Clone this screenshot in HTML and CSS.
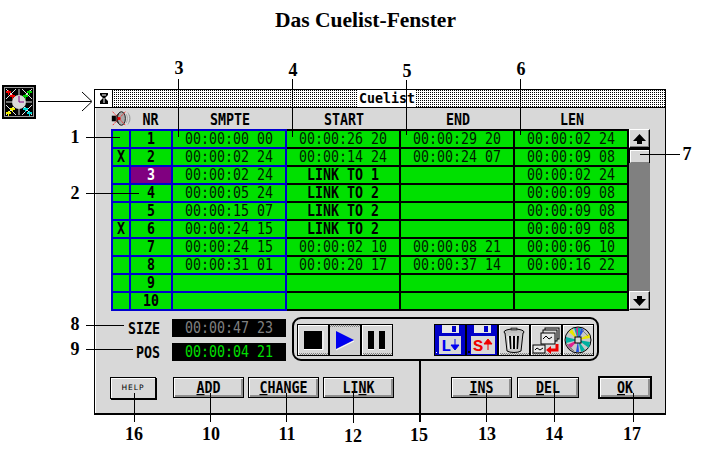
FILE: index.html
```html
<!DOCTYPE html>
<html lang="de">
<head>
<meta charset="utf-8">
<title>Das Cuelist-Fenster</title>
<link rel="stylesheet" href="styles.css">
</head>
<body>
<div class="page">
  <h1 class="heading">Das Cuelist-Fenster</h1>

  <section class="window">
    <div class="titlebar">
      <div class="sysbox">
        <svg width="18" height="17" viewBox="0 0 18 17"><path d="M5 3h8v2l-3 3 3 3v3H5v-3l3-3-3-3z" fill="#000"/><path d="M7 5h4M8 12h2M9 8v3" stroke="#fff" stroke-width="1"/></svg>
      </div>
      <div class="titletrack"><span class="titletext">Cuelist</span></div>
    </div>
    <div class="client">
      <div class="colhead">
        <div class="speaker">
          <svg width="25" height="19" viewBox="0 0 25 19">
            <rect x="1" y="6" width="5" height="7" fill="#000"/>
            <path d="M6 7l5-5h4v15h-4l-5-5z" fill="#606060" stroke="#000"/>
            <ellipse cx="13" cy="9.500" rx="5" ry="8.500" fill="#a8a8a8" stroke="#000"/>
            <path d="M19 4c2 3 2 8 0 11M21 2c3 4 3 11 0 15M23 5c1 3 1 6 0 9" fill="none" stroke="#9a9a9a"/>
            <path d="M2 1l16 17M18 1L2 18" stroke="#f00" fill="none" stroke-dasharray="2 1"/>
            <circle cx="10" cy="9.500" r="2" fill="#e00000"/>
          </svg>
        </div>
        <div class="nrhead"><span class="t">NR</span></div><div><span class="t">SMPTE</span></div><div><span class="t">START</span></div><div><span class="t">END</span></div><div><span class="t">LEN</span></div>
      </div>
      <div class="listarea">
        <div class="grid">
          <div class="c b edge top"></div><div class="c b top"><span class="t">1</span></div><div class="c b top"><span class="l">00:00:00 00</span></div><div class="c k top"><span class="l">00:00:26 20</span></div><div class="c k top"><span class="l">00:00:29 20</span></div><div class="c k top"><span class="l">00:00:02 24</span></div>
          <div class="c b edge"><span class="t">X</span></div><div class="c b"><span class="t">2</span></div><div class="c b"><span class="l">00:00:02 24</span></div><div class="c k"><span class="l">00:00:14 24</span></div><div class="c k"><span class="l">00:00:24 07</span></div><div class="c k"><span class="l">00:00:09 08</span></div>
          <div class="c b edge"></div><div class="c b sel"><span class="t">3</span></div><div class="c b"><span class="l">00:00:02 24</span></div><div class="c k"><span class="t">LINK TO 1</span></div><div class="c k"></div><div class="c k"><span class="l">00:00:02 24</span></div>
          <div class="c b edge"></div><div class="c b"><span class="t">4</span></div><div class="c b"><span class="l">00:00:05 24</span></div><div class="c k"><span class="t">LINK TO 2</span></div><div class="c k"></div><div class="c k"><span class="l">00:00:09 08</span></div>
          <div class="c b edge"></div><div class="c b"><span class="t">5</span></div><div class="c b"><span class="l">00:00:15 07</span></div><div class="c k"><span class="t">LINK TO 2</span></div><div class="c k"></div><div class="c k"><span class="l">00:00:09 08</span></div>
          <div class="c b edge"><span class="t">X</span></div><div class="c b"><span class="t">6</span></div><div class="c b"><span class="l">00:00:24 15</span></div><div class="c k"><span class="t">LINK TO 2</span></div><div class="c k"></div><div class="c k"><span class="l">00:00:09 08</span></div>
          <div class="c b edge"></div><div class="c b"><span class="t">7</span></div><div class="c b"><span class="l">00:00:24 15</span></div><div class="c k"><span class="l">00:00:02 10</span></div><div class="c k"><span class="l">00:00:08 21</span></div><div class="c k"><span class="l">00:00:06 10</span></div>
          <div class="c b edge"></div><div class="c b"><span class="t">8</span></div><div class="c b"><span class="l">00:00:31 01</span></div><div class="c k"><span class="l">00:00:20 17</span></div><div class="c k"><span class="l">00:00:37 14</span></div><div class="c k"><span class="l">00:00:16 22</span></div>
          <div class="c b edge"></div><div class="c b"><span class="t">9</span></div><div class="c b"></div><div class="c k"></div><div class="c k"></div><div class="c k"></div>
          <div class="c b edge"></div><div class="c b"><span class="t">10</span></div><div class="c b"></div><div class="c k"></div><div class="c k"></div><div class="c k"></div>
        </div>
        <div class="scrollbar">
          <div class="arrow"><svg width="15" height="12" viewBox="0 0 15 12"><path d="M7.500 1L14 8H10V11H5V8H1z" fill="#000"/></svg></div>
          <div class="thumbzone"><div class="thumb"></div></div>
          <div class="trough"></div>
          <div class="arrow"><svg width="15" height="12" viewBox="0 0 15 12"><path d="M7.500 11L14 4H10V1H5V4H1z" fill="#000"/></svg></div>
        </div>
      </div>

      <div class="lower">
        <div class="readouts">
          <div class="readout"><span class="rlabel">SIZE</span><span class="lcd dim"><span class="l">00:00:47 23</span></span></div>
          <div class="readout"><span class="rlabel">POS</span><span class="lcd live"><span class="l">00:00:04 21</span></span></div>
        </div>
        <div class="toolbar">
          <div class="transport">
            <div class="tbtn"><svg viewBox="0 0 30 30"><rect x="6" y="6" width="18" height="18" fill="#000"/><path d="M6 24.500h19V6" fill="none" stroke="#fff"/></svg></div>
            <div class="tbtn pressed"><svg viewBox="0 0 30 30"><path d="M6 6l18 9-18 9z" fill="#0000f0"/><path d="M6 25l18-9" stroke="#fff" fill="none"/></svg></div>
            <div class="tbtn"><svg viewBox="0 0 30 30"><rect x="6" y="6" width="6" height="18" fill="#000"/><rect x="17" y="6" width="6" height="18" fill="#000"/><path d="M6 24.500h6M17 24.500h6" stroke="#fff"/></svg></div>
          </div>
          <div class="tools">
            <div class="tbtn disk"><svg viewBox="0 0 30 30"><rect width="30" height="30" fill="#0000c8"/><rect x="7" y="0" width="17" height="8" fill="#e8e8e8"/><rect x="17" y="1" width="4" height="6" fill="#0000c8"/><rect x="4" y="11" width="22" height="18" fill="#d8d8d8"/><rect x="1" y="27" width="1" height="1" fill="#fff"/><text class="disktext blue" x="6" y="26">L</text><path d="M20 14v7M16 20h8l-4 5z" fill="#0000f0" stroke="#0000f0"/></svg></div>
            <div class="tbtn disk"><svg viewBox="0 0 30 30"><rect width="30" height="30" fill="#0000c8"/><rect x="7" y="0" width="17" height="8" fill="#e8e8e8"/><rect x="17" y="1" width="4" height="6" fill="#0000c8"/><rect x="4" y="11" width="24" height="18" fill="#d8d8d8"/><rect x="1" y="26" width="2" height="2" fill="#000"/><text class="disktext red" x="6" y="26">S</text><path d="M21 25v-8M17 19l4-5 4 5z" fill="#f00000" stroke="#f00000"/></svg></div>
            <div class="tbtn"><svg viewBox="0 0 30 30"><ellipse cx="15" cy="7" rx="10" ry="3" fill="#c0c0c0" stroke="#000"/><rect x="12" y="3" width="6" height="2" fill="#808080" stroke="#000" stroke-width=".6"/><path d="M6 8l2 18c3 2 11 2 14 0l2-18" fill="#c8c8c8" stroke="#000"/><path d="M11 11l1 13M15 11v13M19 11l-1 13" stroke="#000" stroke-width="2"/><path d="M9 11l1 13M13 11v13M17 11v13" stroke="#fff"/></svg></div>
            <div class="tbtn"><svg viewBox="0 0 30 30"><rect x="14" y="3" width="14" height="11" fill="#d8d8d8" stroke="#000"/><rect x="12" y="5" width="14" height="11" fill="#d8d8d8" stroke="#000"/><rect x="10" y="8" width="14" height="11" fill="#e8e8e8" stroke="#000"/><path d="M12 14l3-3 3 3 3-2" fill="none" stroke="#000"/><rect x="2" y="20" width="12" height="8" fill="#e8e8e8" stroke="#000"/><path d="M4 25l2-2 3 2 3-2" fill="none" stroke="#000"/><path d="M26 19v6H18" fill="none" stroke="#f00000" stroke-width="3"/><path d="M20 21l-5 4 5 4z" fill="#f00000"/></svg></div>
            <div class="tbtn"><svg viewBox="0 0 30 30"><circle cx="15" cy="15" r="13" fill="#c8c8c8" stroke="#000"/><path d="M15 15L11 3h7zM15 15l12 2-1 6zM15 15l-12-3 0 6zM15 15l3 12 4-2z" fill="#00b0a0"/><path d="M15 15l-9-8 3-3zM15 15l11-6 1 4z" fill="#e8e800"/><path d="M15 15l-11 5 3 4zM15 15L13 3h2z" fill="#e02090"/><path d="M15 15l3-12 3 2zM15 15l-2 12h3z" fill="#2050e0"/><path d="M3 18l8 8M5 22l6 4M19 5l6 6" stroke="#808080" fill="none"/><rect x="12" y="12" width="6" height="6" fill="#d8d8d8" stroke="#000"/></svg></div>
          </div>
        </div>
      </div>

      <div class="buttons">
        <button class="btn help">HELP</button>
        <button class="btn add"><span class="t"><u>A</u>DD</span></button>
        <button class="btn change"><span class="t"><u>C</u>HANGE</span></button>
        <button class="btn link"><span class="t">LI<u>N</u>K</span></button>
        <button class="btn ins"><span class="t"><u>I</u>NS</span></button>
        <button class="btn del"><span class="t"><u>D</u>EL</span></button>
        <button class="btn ok"><span class="t"><u>O</u>K</span></button>
      </div>
    </div>
  </section>

  <div class="appicon">
    <svg width="34" height="34" viewBox="0 0 34 34">
      <rect width="34" height="34" fill="#000"/>
      <rect x="2.500" y="2.500" width="29" height="29" fill="#000" stroke="#9a9a9a"/>
      <path d="M4 4l26 26M30 4L4 30M14 4L4 14M20 4l10 10M4 20l10 10M30 20L20 30M17 4v6M17 24v6M4 17h6M24 17h6" stroke="#e0e0e0" fill="none"/>
      <circle cx="17" cy="17" r="7" fill="#d8d8d8"/>
      <path d="M17 11v6h5" stroke="#800080" fill="none"/>
      <g stroke-width="1.500" shape-rendering="crispEdges">
        <path d="M4 7h5M6.500 4.500v5M8 11h5M10.500 8.500v5" stroke="#f00000"/>
        <path d="M25 7h5M27.500 4.500v5M21 11h5M23.500 8.500v5" stroke="#00d000"/>
        <path d="M4 28h5M6.500 25.500v5M8 24h5M10.500 21.500v5" stroke="#f0f000"/>
        <path d="M25 28h5M27.500 25.500v5M21 24h5M23.500 21.500v5" stroke="#00d8d8"/>
      </g>
    </svg>
  </div>

  <svg class="leaders" width="704" height="450" viewBox="0 0 704 450">
    <g stroke="#000" fill="none" shape-rendering="crispEdges">
      <path d="M38 101.500H91M86 137.500H120M86 193.500H139M640 154.500H680M86 325.500H124M86 349.500H133"/>
      <path d="M178.500 79V137M292.500 79V137M406.500 80V135M520.500 79V135"/>
      <path d="M134.500 393V422M210.500 393V422M286.500 393V422M353.500 393V423M486.500 393V422M554.500 393V422M633.500 393V422"/>
      <path d="M420 359V422" stroke-width="2"/>
    </g>
    <path d="M82 92l10 9.500-10 9.500" stroke="#000" fill="none"/>
  </svg>

  <span class="num n1">1</span><span class="num n2">2</span><span class="num n3">3</span><span class="num n4">4</span><span class="num n5">5</span><span class="num n6">6</span><span class="num n7">7</span><span class="num n8">8</span><span class="num n9">9</span><span class="num n10">10</span><span class="num n11">11</span><span class="num n12">12</span><span class="num n13">13</span><span class="num n14">14</span><span class="num n15">15</span><span class="num n16">16</span><span class="num n17">17</span>
</div>
</body>
</html>
```

FILE: styles.css
```css
* { box-sizing: border-box; }
html, body { margin: 0; padding: 0; background: #fff; }
.page { position: relative; width: 704px; height: 450px; overflow: hidden; font-family: "DejaVu Sans Mono", "Liberation Mono", monospace; color: #000; }
.heading { margin: 0 0 0 275px; height: 89px; padding-top: 8px; font: bold 21.5px/24px "Liberation Serif", serif; white-space: nowrap; }

.window { margin-left: 94px; width: 572px; border: 1px solid #000; border-bottom-width: 2px; background: #d8d8d8; }
.titlebar { display: flex; height: 18px; border-bottom: 1px solid #000; }
.sysbox { width: 18px; background: #fff; border-right: 1px solid #000; flex: none; }
.titletrack { flex: 1; display: flex; justify-content: center; align-items: center; background: conic-gradient(#000 0 25%, #fff 0) 0 0 / 2px 2px; padding-right: 4px; }
.titletext { background: #fff; font-weight: bold; font-size: 13.3px; line-height: 17px; padding: 0 1px; }

.client { padding: 0 0 14px 15px; border-left: 1px solid #fff; }
.colhead { display: grid; grid-template-columns: 20px 42px repeat(4, 114px); height: 21px; text-align: center; align-items: center; }
.speaker { display: flex; height: 19px; }
.nrhead { padding-right: 3px; }

.listarea { display: flex; }
.grid { display: grid; grid-template-columns: 20px 42px repeat(4, 114px); grid-template-rows: 20px repeat(9, 18px); }
.c { display: flex; align-items: center; justify-content: center; background: #00e000; border-right: 2px solid; border-bottom: 2px solid; }
.c.b { border-color: #0000d0; }
.c.k { border-color: #000; }
.c.edge { border-left: 2px solid #0000d0; }
.c.top { border-top: 2px solid; }
.c.b.top { border-top-color: #0000d0; }
.c.k.top { border-top-color: #000; }
.c.sel { background: #800080; color: #fff; }
.t { display: inline-block; font-weight: bold; font-size: 13.3px; line-height: 14px; transform: scaleY(1.2); white-space: pre; }
.l { display: inline-block; font-size: 13.3px; line-height: 14px; color: #001a00; transform: scaleY(1.25); white-space: pre; }

.scrollbar { width: 21px; height: 181px; display: flex; flex-direction: column; }
.arrow { height: 19px; flex: none; display: flex; align-items: center; justify-content: center; background: #d8d8d8; border: 1px solid #000; border-top-color: #fff; border-left-color: #fff; box-shadow: inset -1px -1px 0 #808080; }
.thumbzone { height: 15px; flex: none; background: #000; padding: 2px 1px 0 1px; }
.thumb { height: 13px; background: #d8d8d8; border-top: 1px solid #fff; border-left: 1px solid #fff; border-bottom: 1px solid #808080; }
.trough { flex: 1; background: #808080; }

.lower { display: flex; margin-top: 6px; height: 44px; }
.readouts { width: 175px; display: flex; flex-direction: column; gap: 6px; padding-top: 2px; }
.readout { display: flex; justify-content: flex-end; align-items: center; gap: 12px; height: 18px; }
.rlabel { font-weight: bold; font-size: 13.3px; display: inline-block; transform: scaleY(1.2); }
.lcd { width: 114px; height: 18px; background: #000; display: flex; align-items: center; justify-content: center; }
.lcd.dim .l { color: #808080; }
.lcd.live .l { color: #00e000; }
.toolbar { margin-left: 6px; width: 307px; height: 44px; border: 2px solid #000; border-radius: 9px; display: flex; justify-content: space-between; padding: 5px 3px 0 3px; }
.transport, .tools { display: flex; height: 32px; }
.tbtn { width: 32px; height: 32px; padding: 0; border: 1px solid #000; background: conic-gradient(#808080 0 25%, #d8d8d8 0 50%, #808080 0 75%, #d8d8d8 0) 0 100% / 2px 2px repeat-x, #d8d8d8; box-shadow: inset 1px 1px 0 #fff; }
.tbtn svg { display: block; width: 30px; height: 30px; }
.tbtn.pressed { background: conic-gradient(#808080 0 25%, #d8d8d8 0 50%, #808080 0 75%, #d8d8d8 0) 0 0 / 2px 2px repeat-x, #d0d0d0; box-shadow: none; }
.tbtn.disk { background: #0000c8; box-shadow: none; }
.disktext { font: bold 17px "Liberation Mono", monospace; }
.blue { fill: #0000f0; }
.red { fill: #f00000; }

.buttons { display: flex; align-items: center; margin: 15px 0 0 -1px; height: 23px; gap: 4px; }
.btn { margin: 0; padding: 0; height: 21px; background: #d8d8d8; border: 1px solid #000; font: bold 13.3px/1 "DejaVu Sans Mono", monospace; color: #000; box-shadow: inset 1px 1px 0 #fff, inset -2px -2px 0 #909090; }
.help { width: 46px; height: 22px; font: normal 7.5px "DejaVu Sans", sans-serif; letter-spacing: 1px; margin-right: 13px; box-shadow: inset 1px 1px 0 #fff, 1px 1px 0 #000; }
.add, .change, .link { width: 71px; }
.ins { width: 61px; margin-left: 53px; }
.del { width: 62px; margin-left: 1px; }
.ok { width: 54px; height: 23px; margin-left: 15px; border-width: 2px; }

.appicon { position: absolute; left: 2px; top: 85px; width: 34px; height: 34px; }
.appicon svg, .leaders { display: block; }
.leaders { position: absolute; left: 0; top: 0; pointer-events: none; }
.num { position: absolute; transform: translate(-50%, -50%); font: bold 18px/1 "Liberation Serif", serif; }
.n1 { left: 75px; top: 137px; } .n2 { left: 75px; top: 193px; } .n3 { left: 179px; top: 68px; } .n4 { left: 293px; top: 70px; }
.n5 { left: 407px; top: 71px; } .n6 { left: 521px; top: 69px; } .n7 { left: 687px; top: 154px; } .n8 { left: 75px; top: 324px; }
.n9 { left: 75px; top: 349px; } .n10 { left: 211px; top: 434px; } .n11 { left: 287px; top: 434px; } .n12 { left: 353px; top: 436px; }
.n13 { left: 487px; top: 434px; } .n14 { left: 554px; top: 434px; } .n15 { left: 419px; top: 435px; } .n16 { left: 134px; top: 434px; } .n17 { left: 632px; top: 434px; }
```
